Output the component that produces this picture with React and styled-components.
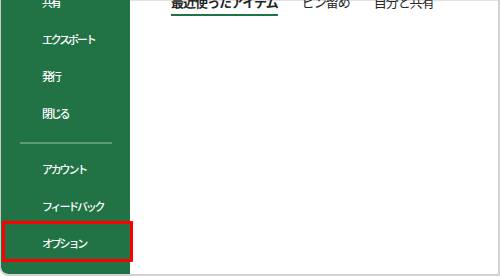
import React from "react";
import styled, { createGlobalStyle } from "styled-components";

const GlobalStyle = createGlobalStyle`
  html, body {
    margin: 0;
    padding: 0;
    background: #ffffff;
  }
  body {
    font-family: "Noto Sans CJK JP", "Noto Sans", sans-serif;
  }
`;

const Window = styled.div`
  width: 500px;
  height: 276px;
  box-sizing: border-box;
  display: flex;
  overflow: hidden;
  background: #ffffff;
  border-left: 1px solid #c9c9c9;
  border-right: 2px solid #d2d2d2;
  border-bottom: 2px solid #d2d2d2;
  border-bottom-left-radius: 8px;
`;

const Sidebar = styled.nav`
  width: 129px;
  flex-shrink: 0;
  background: #217346;
  display: flex;
  flex-direction: column;
  border-bottom-left-radius: 7px;
`;

const MenuList = styled.div`
  display: flex;
  flex-direction: column;
  margin-top: -17px;
`;

const MenuItem = styled.div`
  position: relative;
  height: 37px;
  display: flex;
  align-items: center;
  padding-left: 41px;
  color: #ffffff;
  font-size: 11px;
  font-weight: 500;
  letter-spacing: -2.2px;
  white-space: nowrap;

  ${({ $marked }) =>
    $marked &&
    `
    &::after {
      content: "";
      position: absolute;
      left: 1px;
      right: -3px;
      top: -3px;
      bottom: -1px;
      border: 3px solid #ff0000;
      border-radius: 1px;
    }
  `}
`;

const Divider = styled.div`
  height: 2px;
  margin: 11px 18px 6px 19px;
  background: rgba(255, 255, 255, 0.28);
`;

const Main = styled.main`
  flex: 1;
  box-shadow: inset 0 1px 0 #e2e2e2;
  padding-left: 41px;
`;

const Tabs = styled.div`
  display: flex;
  gap: 24px;
  margin-top: -5px;
`;

const Tab = styled.div`
  font-size: 13px;
  line-height: 14px;
  letter-spacing: -1px;
  color: #262626;
  font-weight: ${({ $active }) => ($active ? 700 : 400)};
  padding-bottom: 5px;
  border-bottom: 2px solid ${({ $active }) => ($active ? "#217346" : "transparent")};
  white-space: nowrap;
`;

const topItems = ["共有", "エクスポート", "発行", "閉じる"];
const bottomItems = ["アカウント", "フィードバック", "オプション"];

export default function App() {
  return (
    <>
      <GlobalStyle />
      <Window>
        <Sidebar>
          <MenuList>
            {topItems.map((label) => (
              <MenuItem key={label}>{label}</MenuItem>
            ))}
            <Divider />
            {bottomItems.map((label) => (
              <MenuItem key={label} $marked={label === "オプション"}>
                {label}
              </MenuItem>
            ))}
          </MenuList>
        </Sidebar>
        <Main>
          <Tabs>
            <Tab $active>最近使ったアイテム</Tab>
            <Tab>ピン留め</Tab>
            <Tab>自分と共有</Tab>
          </Tabs>
        </Main>
      </Window>
    </>
  );
}
